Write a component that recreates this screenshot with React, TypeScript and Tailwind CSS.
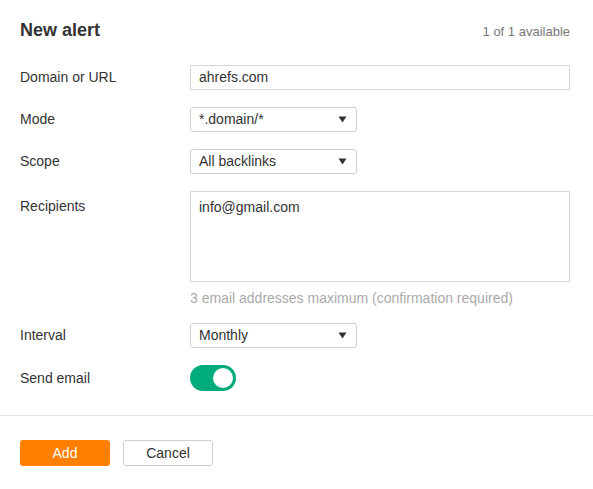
import { useState } from 'react';

const Caret = () => (
  <svg width="9" height="7" viewBox="0 0 9 7" className="text-[#333]">
    <path d="M0.5 0.5 H8.5 L4.5 6.5 Z" fill="currentColor" />
  </svg>
);

const SelectBox = ({ value }: { value: string }) => (
  <div className="flex h-[25px] w-[167px] items-center justify-between rounded-[3px] border border-[#cfcfcf] bg-white pl-[8px] pr-[9px] text-[14px] text-[#333]">
    <span>{value}</span>
    <Caret />
  </div>
);

const Row = ({ label, children, top }: { label: string; children: React.ReactNode; top?: boolean }) => (
  <div className={top ? 'flex items-start' : 'flex items-center'}>
    <div className={top ? 'w-[170px] shrink-0 pt-[6px] leading-[18px] text-[#333]' : 'w-[170px] shrink-0 text-[#333]'}>
      {label}
    </div>
    <div className="flex-1">{children}</div>
  </div>
);

export default function App() {
  const [sendEmail, setSendEmail] = useState(true);

  return (
    <div className="h-[489px] w-[593px] overflow-hidden bg-white font-['Liberation_Sans',Arial,sans-serif] text-[14px] text-[#333]">
      <div className="pl-5 pr-[23px] pt-[19px]">
        <div className="flex h-[22px] items-baseline justify-between">
          <h2 className="text-[18px] font-bold leading-[22px] text-[#333]">New alert</h2>
          <span className="text-[13px] text-[#777]">1 of 1 available</span>
        </div>

        <div className="mt-[24px] flex flex-col">
          <Row label="Domain or URL">
            <div className="flex h-[25px] items-center border border-[#d6d6d6] bg-white px-[8px] text-[#333]">
              ahrefs.com
            </div>
          </Row>

          <div className="mt-[17px]">
            <Row label="Mode">
              <SelectBox value="*.domain/*" />
            </Row>
          </div>

          <div className="mt-[17px]">
            <Row label="Scope">
              <SelectBox value="All backlinks" />
            </Row>
          </div>

          <div className="mt-[17px]">
            <Row label="Recipients" top>
              <div className="h-[91px] border border-[#d6d6d6] bg-white px-[8px] pt-[6px] leading-[18px] text-[#333]">
                info@gmail.com
              </div>
              <p className="mt-[7px] leading-[18px] text-[#aaa]">
                3 email addresses maximum (confirmation required)
              </p>
            </Row>
          </div>

          <div className="mt-[16px]">
            <Row label="Interval">
              <SelectBox value="Monthly" />
            </Row>
          </div>

          <div className="mt-[17px]">
            <Row label="Send email">
              <button
                onClick={() => setSendEmail(!sendEmail)}
                className={
                  sendEmail
                    ? 'flex h-[26px] w-[46px] items-center justify-end rounded-full bg-[#00ab7b] px-[3px]'
                    : 'flex h-[26px] w-[46px] items-center justify-start rounded-full bg-[#ccc] px-[3px]'
                }
              >
                <span className="h-[20px] w-[20px] rounded-full bg-white" />
              </button>
            </Row>
          </div>
        </div>
      </div>

      <div className="mt-[24px] border-t border-[#e6e6e6]" />

      <div className="flex gap-[13px] px-5 pt-[24px]">
        <button className="h-[26px] w-[90px] rounded-[3px] bg-[#ff8000] text-[14px] text-white">
          Add
        </button>
        <button className="h-[26px] w-[90px] rounded-[3px] border border-[#cfcfcf] bg-white text-[14px] text-[#333]">
          Cancel
        </button>
      </div>
    </div>
  );
}
